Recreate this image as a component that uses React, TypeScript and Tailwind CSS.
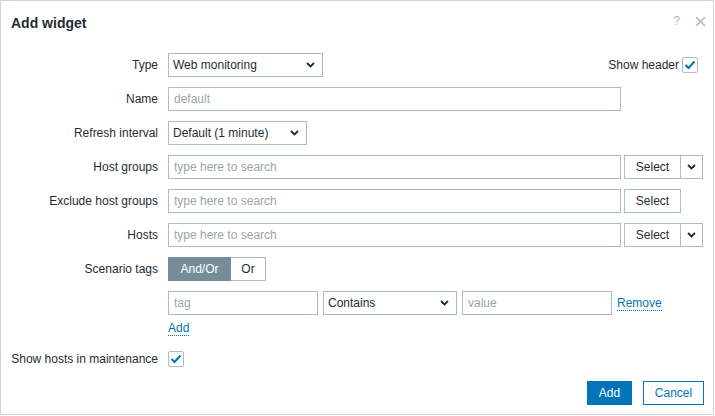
import React from "react";

const Chevron = () => (
    <svg width="9" height="6" viewBox="0 0 9 6" className="shrink-0">
        <path d="M1 1l3.5 3.5L8 1" fill="none" stroke="#1f2c33" strokeWidth="1.8" />
    </svg>
);

const Check = () => (
    <div className="w-[16px] h-[16px] border border-[#acbbc2] rounded-[2px] bg-white flex items-center justify-center">
        <svg width="12" height="10" viewBox="0 0 12 10">
            <path d="M1.5 5l3 3L10.5 1.5" fill="none" stroke="#0275b8" strokeWidth="2" />
        </svg>
    </div>
);

const Select: React.FC<{ value: string; w: string }> = ({ value, w }) => (
    <div className={`${w} h-[24px] border border-[#acbbc2] bg-white flex items-center justify-between pl-[4px] pr-[7px]`}>
        <span>{value}</span>
        <Chevron />
    </div>
);

const Input: React.FC<{ placeholder: string; w: string }> = ({ placeholder, w }) => (
    <div className={`${w} h-[24px] border border-[#acbbc2] bg-white flex items-center px-[5px] text-[#9aa6ac]`}>
        {placeholder}
    </div>
);

const Label: React.FC<{ children: React.ReactNode }> = ({ children }) => (
    <div className="h-[24px] flex items-center justify-end whitespace-nowrap">{children}</div>
);

const MultiSelect: React.FC<{ dropdown?: boolean }> = ({ dropdown }) => (
    <div className="flex items-center">
        <Input placeholder="type here to search" w="w-[453px]" />
        <div className="ml-[3px] w-[57px] h-[24px] border border-[#acbbc2] bg-white flex items-center justify-center">
            Select
        </div>
        {dropdown && (
            <div className="-ml-px w-[23px] h-[24px] border border-[#acbbc2] bg-white flex items-center justify-center">
                <Chevron />
            </div>
        )}
    </div>
);

export default function App() {
    return (
        <div className="w-[714px] h-[415px] border border-[#ccd5d9] bg-white flex flex-col font-['Liberation_Sans',Arial,sans-serif] text-[12px] text-[#1f2c33]">
            {/* header */}
            <div className="flex items-start justify-between pl-[10px] pr-[7px] pt-[12px] h-[52px]">
                <h1 className="text-[14px] font-bold leading-[20px] text-[#1f2c33]">Add widget</h1>
                <div className="flex items-center gap-[15px] pt-[1px]">
                    <span className="text-[12px] text-[#acbbc2] leading-[14px]">?</span>
                    <svg width="11" height="11" viewBox="0 0 11 11">
                        <path d="M1 1l9 9M10 1l-9 9" stroke="#acbbc2" strokeWidth="1.5" />
                    </svg>
                </div>
            </div>

            {/* form */}
            <div className="grid grid-cols-[157px_1fr] gap-x-[10px] gap-y-[10px] pr-[10px]">
                <Label>Type</Label>
                <div className="flex items-center justify-between pr-[5px]">
                    <Select value="Web monitoring" w="w-[155px]" />
                    <div className="flex items-center gap-[3px]">
                        <span>Show header</span>
                        <Check />
                    </div>
                </div>

                <Label>Name</Label>
                <Input placeholder="default" w="w-[453px]" />

                <Label>Refresh interval</Label>
                <Select value="Default (1 minute)" w="w-[139px]" />

                <Label>Host groups</Label>
                <MultiSelect dropdown />

                <Label>Exclude host groups</Label>
                <MultiSelect />

                <Label>Hosts</Label>
                <MultiSelect dropdown />

                <Label>Scenario tags</Label>
                <div className="flex items-center">
                    <div className="w-[63px] h-[24px] bg-[#768d99] border border-[#768d99] text-white flex items-center justify-center">
                        And/Or
                    </div>
                    <div className="w-[35px] h-[24px] border border-[#acbbc2] border-l-0 bg-white flex items-center justify-center">
                        Or
                    </div>
                </div>

                <div />
                <div className="flex flex-col items-start">
                    <div className="flex items-center gap-[5px]">
                        <Input placeholder="tag" w="w-[150px]" />
                        <Select value="Contains" w="w-[134px]" />
                        <Input placeholder="value" w="w-[150px]" />
                        <span className="text-[#0275b8] border-b border-dotted border-[#0275b8] leading-[14px]">Remove</span>
                    </div>
                    <span className="mt-[6px] text-[#0275b8] border-b border-dotted border-[#0275b8] leading-[14px]">Add</span>
                </div>

                <div className="mt-[2px] h-[22px] flex items-center justify-end whitespace-nowrap">Show hosts in maintenance</div>
                <div className="mt-[2px] h-[22px] flex items-center">
                    <Check />
                </div>
            </div>

            {/* footer */}
            <div className="mt-auto flex justify-end gap-[11px] pr-[9px] pb-[9px]">
                <button className="w-[45px] h-[24px] bg-[#0275b8] border border-[#0275b8] text-white">Add</button>
                <button className="w-[61px] h-[24px] bg-white border border-[#0275b8] text-[#0275b8]">Cancel</button>
            </div>
        </div>
    );
}
